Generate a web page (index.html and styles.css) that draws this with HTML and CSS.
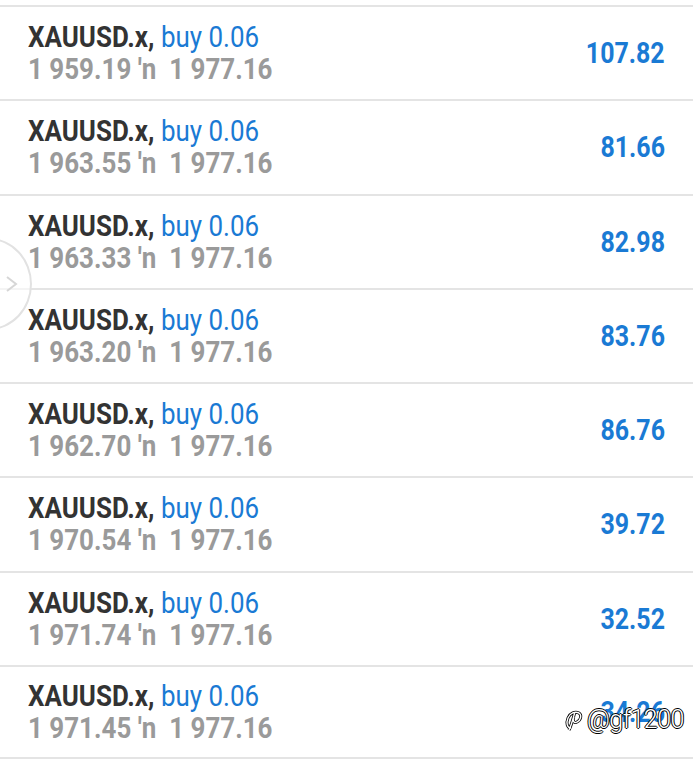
FILE: index.html
```html
<!DOCTYPE html>
<html lang="en">
<head>
    <meta charset="UTF-8">
    <meta name="viewport" content="width=device-width, initial-scale=1.0">
    <title>Positions</title>
    <link rel="stylesheet" href="styles.css">
</head>
<body>
    <div class="list">
        <div class="row">
            <div class="info">
                <div class="title">XAUUSD.x, <span class="side">buy 0.06</span></div>
                <div class="prices">1 959.19 ′n&nbsp; 1 977.16</div>
            </div>
            <div class="profit">107.82</div>
        </div>
        <div class="row">
            <div class="info">
                <div class="title">XAUUSD.x, <span class="side">buy 0.06</span></div>
                <div class="prices">1 963.55 ′n&nbsp; 1 977.16</div>
            </div>
            <div class="profit">81.66</div>
        </div>
        <div class="row">
            <div class="info">
                <div class="title">XAUUSD.x, <span class="side">buy 0.06</span></div>
                <div class="prices">1 963.33 ′n&nbsp; 1 977.16</div>
            </div>
            <div class="profit">82.98</div>
        </div>
        <div class="row">
            <div class="info">
                <div class="title">XAUUSD.x, <span class="side">buy 0.06</span></div>
                <div class="prices">1 963.20 ′n&nbsp; 1 977.16</div>
            </div>
            <div class="profit">83.76</div>
        </div>
        <div class="row">
            <div class="info">
                <div class="title">XAUUSD.x, <span class="side">buy 0.06</span></div>
                <div class="prices">1 962.70 ′n&nbsp; 1 977.16</div>
            </div>
            <div class="profit">86.76</div>
        </div>
        <div class="row">
            <div class="info">
                <div class="title">XAUUSD.x, <span class="side">buy 0.06</span></div>
                <div class="prices">1 970.54 ′n&nbsp; 1 977.16</div>
            </div>
            <div class="profit">39.72</div>
        </div>
        <div class="row">
            <div class="info">
                <div class="title">XAUUSD.x, <span class="side">buy 0.06</span></div>
                <div class="prices">1 971.74 ′n&nbsp; 1 977.16</div>
            </div>
            <div class="profit">32.52</div>
        </div>
        <div class="row">
            <div class="info">
                <div class="title">XAUUSD.x, <span class="side">buy 0.06</span></div>
                <div class="prices">1 971.45 ′n&nbsp; 1 977.16</div>
            </div>
            <div class="profit">34.26</div>
        </div>
    </div>

    <!-- side drawer handle -->
    <div class="handle">
        <svg width="14" height="18" viewBox="0 0 14 18">
            <path d="M3 2 L12 9 L3 16" fill="none" stroke="#d6d6d6" stroke-width="2"/>
        </svg>
    </div>

    <div class="watermark">
        <svg width="22" height="24" viewBox="0 0 22 24">
            <path d="M8 20 C4 20 3 15 5 10 C7 5 12 3 16 5 C19 7 18 12 14 14 C11 16 9 12 11 9 M12 4 C10 10 9 16 6 22" fill="none" stroke="#000" stroke-width="3"/>
            <path d="M8 20 C4 20 3 15 5 10 C7 5 12 3 16 5 C19 7 18 12 14 14 C11 16 9 12 11 9 M12 4 C10 10 9 16 6 22" fill="none" stroke="#fff" stroke-width="1.4"/>
        </svg>
        <span>@gf1200</span>
    </div>
</body>
</html>
```

FILE: styles.css
```css
body {
    margin: 0;
    padding: 0;
    background: #fff;
    font-family: 'Roboto', sans-serif;
    overflow: hidden;
    height: 763px;
}

.list {
    padding-top: 5px;
}

.row {
    box-sizing: border-box;
    height: 94.25px;
    display: flex;
    justify-content: space-between;
    align-items: center;
    padding: 0 28px 0 28px;
    border-top: 2px solid #e4e4e4;
}

.row:last-child {
    border-bottom: 2px solid #e4e4e4;
}

.info {
    transform: scaleX(0.895);
    transform-origin: left center;
    white-space: nowrap;
}

.title {
    font-size: 29px;
    line-height: 32px;
    font-weight: 700;
    color: #333;
}

.side {
    font-weight: 400;
    color: #1a7ad4;
}

.prices {
    font-size: 29px;
    line-height: 32px;
    font-weight: 700;
    color: #9a9a9a;
}

.profit {
    font-size: 29px;
    font-weight: 700;
    color: #1a7ad4;
    transform: scaleX(0.86);
    transform-origin: right center;
}

.handle {
    position: absolute;
    left: -54px;
    top: 238px;
    width: 86px;
    height: 92px;
    border: 2px solid #e2e2e2;
    border-radius: 50%;
    background: rgba(255, 255, 255, 0.6);
    display: flex;
    align-items: center;
    justify-content: flex-end;
    padding-right: 12px;
    box-sizing: border-box;
}

.watermark {
    position: absolute;
    left: 563px;
    top: 705px;
    display: flex;
    align-items: center;
    gap: 2px;
    font-family: 'Roboto', sans-serif;
    font-weight: 300;
    font-size: 25px;
    color: #fff;
    letter-spacing: -0.5px;
    text-shadow: -1px 0 #000, 1px 0 #000, 0 -1px #000, 0 1px #000;
}
```
